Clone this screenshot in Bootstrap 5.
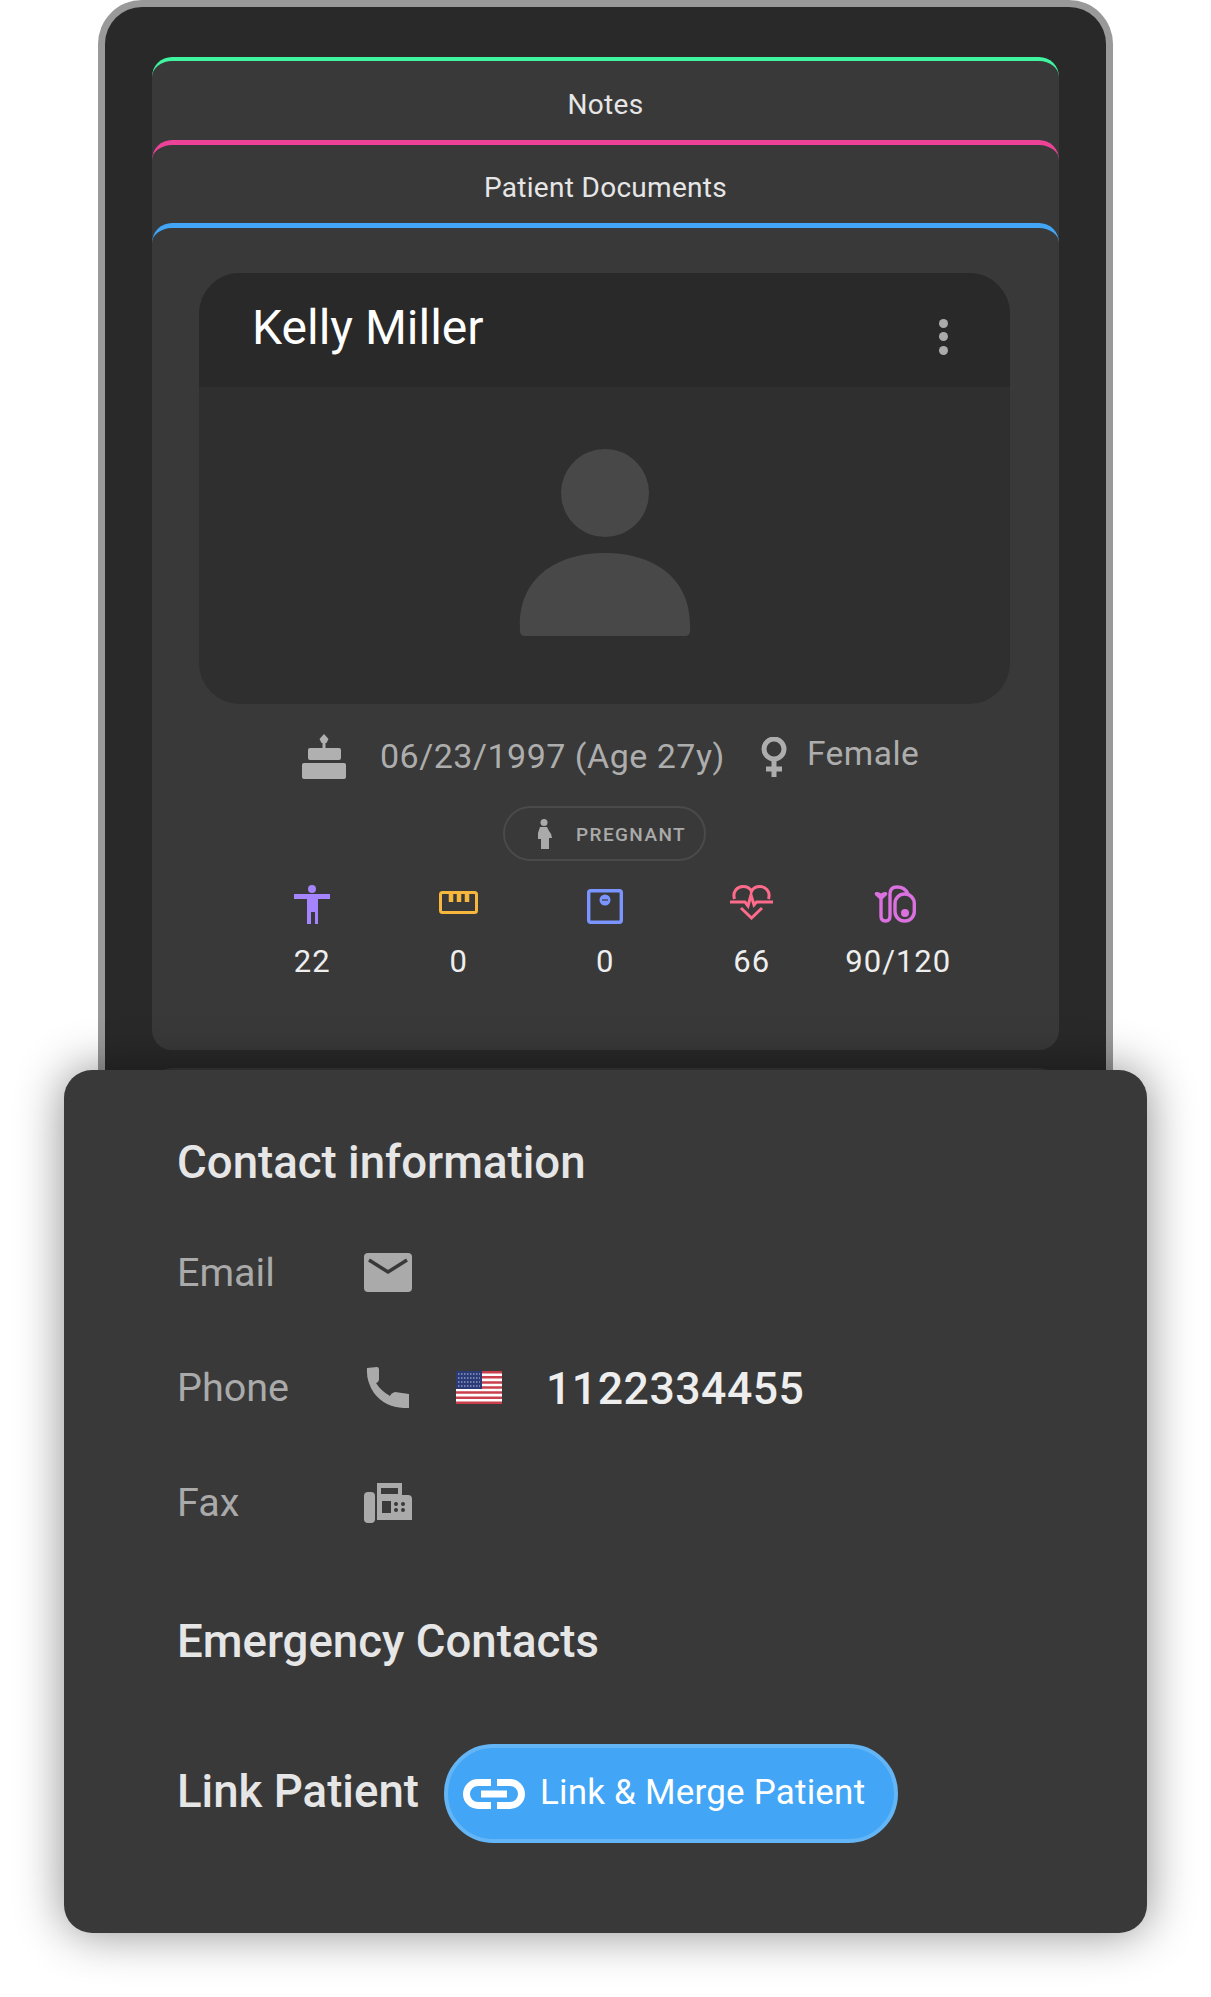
<!DOCTYPE html>
<html lang="en">
<head>
  <meta charset="UTF-8" />
  <title>Patient Profile</title>
  <meta name="viewport" content="width=device-width, initial-scale=1" />
  <link href="https://cdn.jsdelivr.net/npm/bootstrap@5.3.0/dist/css/bootstrap.min.css" rel="stylesheet" />
  <style>
    body {
      font-family: Roboto, "Liberation Sans", sans-serif;
      background-color: #fff;
      height: 1997px;
      overflow: hidden;
    }

    .device-frame {
      margin: 0 98px;
      height: 1090px;
      padding: 50px 47px 0;
      background-color: #292929;
      border: 7px solid #999;
      border-bottom: 0;
      border-radius: 44px 44px 0 0;
      overflow: hidden;
    }

    .stack-tab {
      background-color: #393939;
      border-top: 5px solid;
      border-radius: 20px 20px 0 0;
      color: #e6e6e6;
      font-size: 28px;
      letter-spacing: .3px;
      text-align: center;
      height: 103px;
      margin-bottom: -20px;
      line-height: 87px;
    }

    .tab-notes { border-color: #3ff5a0; border-top-width: 4px; }
    .tab-docs { border-color: #ec4399; line-height: 85px; }

    .profile-tab {
      position: relative;
      background-color: #393939;
      border-top: 5px solid #42a5f5;
      border-radius: 20px;
      height: 827px;
      padding: 45px 49px 0 47px;
    }

    .next-tab {
      background-color: #393939;
      border-radius: 20px 20px 0 0;
      height: 40px;
      margin-top: 18px;
    }

    .photo-card {
      height: 431px;
      background-color: #2f2f2f;
      border-radius: 41px;
      overflow: hidden;
    }

    .photo-head {
      height: 114px;
      background-color: #292929;
      padding: 0 62px 0 53px;
    }

    .patient-name {
      color: #fff;
      font-size: 48px;
      line-height: 110px;
      font-weight: 400;
      margin: 0;
    }

    .dots-btn span {
      display: block;
      width: 9px;
      height: 9px;
      margin-bottom: 4.5px;
      border-radius: 50%;
      background-color: #aaa;
    }

    .dots-btn { margin-top: 18px; }

    .avatar-wrap { padding-top: 61px; }

    .meta-row {
      color: #adadad;
      font-size: 34px;
      letter-spacing: .5px;
      margin-top: 30px;
      height: 45px;
      padding-left: 103px;
    }

    .meta-date { margin-left: 34px; }
    .meta-sex-icon { margin-left: 36px; }

    .meta-sex {
      margin-left: 20px;
      font-size: 33.5px;
      margin-bottom: 5px;
    }

    .chip-pregnant {
      width: 203px;
      height: 55px;
      margin: 27px auto 0;
      border: 2px solid #4a4a4a;
      border-radius: 28px;
      color: #aaa;
      font-size: 19px;
      font-weight: 500;
      letter-spacing: 1.4px;
      padding-left: 33px;
    }

    .chip-text { margin-top: 3px; }

    .vitals-row {
      margin-top: 24px;
      padding: 0 0 0 40px;
    }

    .vital-item {
      width: 146.5px;
      text-align: center;
      color: #eee;
      font-size: 31px;
      letter-spacing: 1px;
    }

    .vital-icon {
      height: 40px;
      margin-bottom: 14px;
    }

    .vital-icon .icon-ruler { margin-top: 6px; }
    .vital-icon .icon-scale { margin-top: 4px; }
    .vital-icon .icon-steth { transform: translateX(-3px); }

    .contact-panel {
      position: relative;
      z-index: 2;
      height: 863px;
      margin: -20px 64px 0;
      padding: 61px 113px 0;
      background-color: #393939;
      border-radius: 28px;
      box-shadow: 0 0 48px rgba(0,0,0,.45);
    }

    .panel-title {
      color: #e6e6e6;
      font-size: 45.6px;
      font-weight: 500;
      margin: 0;
      line-height: 64px;
    }

    .contact-list { margin-top: 20px; }

    .contact-row {
      height: 115px;
      color: #aaa;
      font-size: 39.5px;
    }

    .contact-label { width: 187px; }

    .phone-icon { margin-left: 2px; }
    .flag-icon { margin-left: 47px; }

    .phone-number {
      margin: 4px 0 0 44px;
      color: #eee;
      font-size: 44.6px;
      font-weight: 500;
      letter-spacing: .5px;
    }

    .emergency-title { margin-top: 50px; }

    .link-row {
      margin-top: 70px;
      gap: 25px;
    }

    .link-row .panel-title { margin-bottom: 4px; }

    .btn-merge {
      width: 454px;
      height: 99px;
      padding: 0 0 0 15px;
      background-color: #42a5f5;
      border: 4px solid #64b5f6;
      border-radius: 50px;
      color: #fff;
      font-size: 35px;
      letter-spacing: .2px;
      gap: 15px;
    }
  </style>
</head>
<body>

  <div class="device-frame">
    <div class="stack-tab tab-notes">Notes</div>
    <div class="stack-tab tab-docs">Patient Documents</div>

    <div class="profile-tab">
      <div class="photo-card">
        <div class="photo-head d-flex justify-content-between align-items-center">
          <h1 class="patient-name align-self-start">Kelly Miller</h1>
          <div class="dots-btn"><span></span><span></span><span></span></div>
        </div>
        <div class="avatar-wrap d-flex justify-content-center">
          <svg width="172" height="188" viewBox="0 0 172 188">
            <circle cx="86" cy="45" r="44" fill="#484848"/>
            <path d="M1 183 C-2 128 40 105 86 105 C132 105 174 128 171 183 Q171 188 166 188 H6 Q1 188 1 183 Z" fill="#484848"/>
          </svg>
        </div>
      </div>

      <div class="meta-row d-flex align-items-center">
        <svg width="44" height="45" viewBox="0 0 44 45" fill="#b0b0b0">
          <path d="M22 0 L26.500 5 L24.500 9 H23.500 V14 H20.500 V9 H19.500 L17.500 5 Z"/>
          <rect x="6" y="14" width="33" height="12" rx="2"/>
          <rect y="29" width="44" height="16" rx="2"/>
        </svg>
        <span class="meta-date">06/23/1997 (Age 27y)</span>
        <svg class="meta-sex-icon" width="26" height="40" viewBox="0 0 26 40" fill="none" stroke="#adadad" stroke-width="5">
          <circle cx="13" cy="12" r="10"/>
          <path d="M13 22 V40 M5 32 H21"/>
        </svg>
        <span class="meta-sex">Female</span>
      </div>

      <div class="chip-pregnant d-flex align-items-center gap-4">
        <svg width="14" height="30" viewBox="0 0 14 30" fill="#aaa">
          <circle cx="6" cy="3.500" r="3.500"/>
          <path d="M2 8 H9 L11 12 Q14 15 14 19 H11 V30 H3 V20 H0 V14 Z"/>
        </svg>
        <span class="chip-text">PREGNANT</span>
      </div>

      <div class="vitals-row d-flex">
        <div class="vital-item">
          <div class="vital-icon d-flex justify-content-center align-items-start">
            <svg width="36" height="39" viewBox="0 0 36 39" fill="#a585ff">
              <circle cx="18" cy="4" r="4"/>
              <path d="M0 9 H36 V14 H24 V39 H21 V27 H17 V39 H13 V14 H0 Z"/>
            </svg>
          </div>
          22
        </div>
        <div class="vital-item">
          <div class="vital-icon d-flex justify-content-center align-items-start">
            <svg class="icon-ruler" width="39" height="23" viewBox="0 0 39 23" fill="none" stroke="#f6b73c" stroke-width="3">
              <rect x="1.500" y="1.500" width="36" height="20" rx="2"/>
              <path d="M12 2 V11 M20 2 V11 M28 2 V11" stroke-width="4.500"/>
            </svg>
          </div>
          0
        </div>
        <div class="vital-item">
          <div class="vital-icon d-flex justify-content-center align-items-start">
            <svg class="icon-scale" width="36" height="35" viewBox="0 0 36 35">
              <rect x="1.700" y="1.700" width="32.600" height="31.600" rx="2" fill="none" stroke="#7a95ff" stroke-width="3.400"/>
              <circle cx="18" cy="11" r="5.500" fill="#7a95ff"/>
              <path d="M15 11 H21" stroke="#393939" stroke-width="1.200"/>
            </svg>
          </div>
          0
        </div>
        <div class="vital-item">
          <div class="vital-icon d-flex justify-content-center align-items-start">
            <svg width="43" height="35" viewBox="0 0 43 35" fill="none" stroke="#ff6b8b" stroke-width="3">
              <path d="M4.500 14 C2 6 8 1.500 13 1.500 C17 1.500 20 3 21.500 6.500 C23 3 26 1.500 30 1.500 C35 1.500 41 6 38.500 14"/>
              <path d="M0 17 H15 L18 21 L21 10 L24 20 L26.500 17 H43"/>
              <path d="M11 23 L21.500 33 L32 23"/>
            </svg>
          </div>
          66
        </div>
        <div class="vital-item">
          <div class="vital-icon d-flex justify-content-center align-items-start">
            <svg class="icon-steth" width="42" height="38" viewBox="0 0 42 38" fill="none" stroke="#db70df" stroke-width="3.400">
              <path d="M7 12 V31 Q7 36 11.500 36 Q16 36 16 31 V9 Q16 2 23 2 Q31 2 34 9"/>
              <rect x="21" y="9" width="19.300" height="27" rx="9.500"/>
              <circle cx="31" cy="28" r="4" fill="#db70df" stroke="none"/>
              <path d="M7 15.500 L1.500 10.500 Q-.5 8 2 7 Q5 6.500 7 8.500 Q9 6.500 12 7 Q14.500 8 12.500 10.500 Z" fill="#db70df" stroke="none"/>
            </svg>
          </div>
          90/120
        </div>
      </div>
    </div>

    <div class="next-tab"></div>
  </div>

  <div class="contact-panel">
    <h2 class="panel-title">Contact information</h2>

    <div class="contact-list">
      <div class="contact-row d-flex align-items-center">
        <div class="contact-label">Email</div>
        <svg width="48" height="39" viewBox="0 0 48 39">
          <rect width="48" height="39" rx="4" fill="#aaa"/>
          <path d="M5 7 L24 19 L43 7" fill="none" stroke="#393939" stroke-width="3.500"/>
        </svg>
      </div>

      <div class="contact-row d-flex align-items-center">
        <div class="contact-label">Phone</div>
        <svg class="phone-icon" width="43" height="41" viewBox="0 0 43 41" fill="#aaa">
          <path d="M1 1 L11 0 Q13 0 13 3 L13 12 Q13 15 10 16 Q15 24 24 29 Q25 26 29 25 L43 27 L43 41 Q20 42 8 26 Q0 14 1 1 Z"/>
        </svg>
        <svg class="flag-icon" width="46" height="33" viewBox="0 0 46 33">
          <rect width="46" height="33" fill="#fff"/>
          <path d="M0 1.300 H46 M0 6.300 H46 M0 11.400 H46 M0 16.500 H46 M0 21.600 H46 M0 26.700 H46 M0 31.700 H46" stroke="#c8404c" stroke-width="2.500"/>
          <rect width="26" height="18" fill="#2a3b78"/>
          <path d="M2 3 H24 M2 7 H24 M2 11 H24 M2 15 H24" stroke="#8f9ac0" stroke-width="1.500" stroke-dasharray="1.500 1.500"/>
        </svg>
        <div class="phone-number">1122334455</div>
      </div>

      <div class="contact-row d-flex align-items-center">
        <div class="contact-label">Fax</div>
        <svg width="48" height="40" viewBox="0 0 48 40">
          <rect y="9" width="11" height="31" rx="4" fill="#aaa"/>
          <path d="M13 0 H38 V12 H44 Q48 12 48 16 V37 H13 Z" fill="#aaa"/>
          <rect x="17" y="5" width="17" height="6" fill="#393939"/>
          <rect x="18" y="18" width="9" height="12" fill="#393939"/>
          <g fill="#393939">
            <circle cx="32" cy="21" r="2"/><circle cx="39" cy="21" r="2"/>
            <circle cx="32" cy="27" r="2"/><circle cx="39" cy="27" r="2"/>
          </g>
        </svg>
      </div>
    </div>

    <h2 class="panel-title emergency-title">Emergency Contacts</h2>

    <div class="link-row d-flex align-items-center">
      <h2 class="panel-title">Link Patient</h2>
      <button type="button" class="btn btn-merge d-flex align-items-center">
        <svg width="62" height="30" viewBox="0 0 62 30" fill="none" stroke="#fff" stroke-width="7">
          <path d="M28 3.500 H15 A11.500 11.500 0 0 0 15 26.500 H28"/>
          <path d="M34 3.500 H47 A11.500 11.500 0 0 1 47 26.500 H34"/>
          <path d="M18 15 H44"/>
        </svg>
        Link &amp; Merge Patient
      </button>
    </div>
  </div>

</body>
</html>
